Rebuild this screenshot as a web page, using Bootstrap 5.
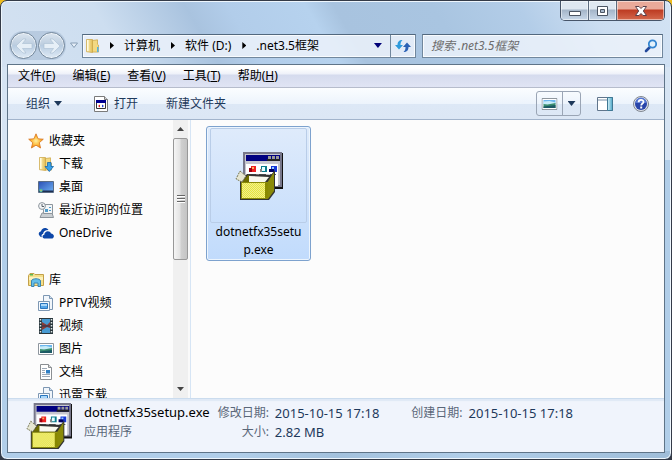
<!DOCTYPE html>
<html lang="zh-CN">
<head>
<meta charset="utf-8">
<meta name="viewport" content="width=device-width, initial-scale=1">
<title>.net3.5框架</title>
<link href="https://cdn.jsdelivr.net/npm/bootstrap@5.3.0/dist/css/bootstrap.min.css" rel="stylesheet">
<style>
:root{--ink:#1e395b;--edge:#5f7488}
body{font-family:"Noto Sans","Noto Sans CJK SC",sans-serif;font-size:12px;line-height:18px;color:#000;
 background:linear-gradient(90deg,#eebb1c 0 6px,#353b47 6px calc(100% - 6px),#eebb1c calc(100% - 6px)) top/100% 6px no-repeat,#353b47}
button{font:inherit;color:inherit;background:none;border:0;padding:0}
svg{display:block;flex:none}
.win{height:100vh;border:1px solid #343b48;border-radius:7px;overflow:hidden;padding:0 6px 6px;
 box-shadow:inset 0 0 0 1px #eef6fd;
 background:
 linear-gradient(60deg,#d3e1f1 0,#cddef0 18%,#a9c3df 31%,#b2cdea 37%,#b6d2ee 48%,#a8c3df 52%,#a9c5e1 66%,#b3cde8 78%,#cbddf1 88%,#d3e3f4) top/100% 66px no-repeat,
 linear-gradient(90deg,#b1cee9 0 35%,#a3c1dd 50%,#b1cee9 70%,#9fbdd9) bottom/100% 8px no-repeat,
 linear-gradient(180deg,#d6e4f3 0 159px,#b1cee9 159px)}
.capbtns{height:20px;border:1px solid #475569;border-top:0;border-radius:0 0 5px 5px;overflow:hidden}
.capbtns button{width:28px;background:linear-gradient(#dfe8f1 0 8px,#a4b5c8 9px,#c8d8e9);border-right:1px solid #5c6b7e;box-shadow:inset 0 0 0 1px #ffffff80}
.capbtns .close-w{width:47px;border:0;background:linear-gradient(#e9aa9a 0 8px,#bd3b22 9px,#d4694d)}
.navrow{padding:10px 2px 4px 2px}
.orb{width:27px;height:27px;border:1px solid #74889c;border-radius:50%;background:linear-gradient(#dbe5ef,#bccddf 48%,#b8cce1 50%,#dfeaf5);box-shadow:inset 0 0 0 1px #ffffff90}
.orbs{gap:1px;background:#9fb6cf80;border-radius:14px;padding:1px}
.field-w{height:24px;border:1px solid #71879d;border-top-color:#52687e;background:#ecf2fad9;box-shadow:inset 0 0 0 1px #f8fbfe}
.addr{flex:336 1 0;margin-right:6px}
.find{flex:242 1 0}
.find input{font-style:italic;border:0;background:none;outline:0;min-width:0;color:#333}
.find input::placeholder{color:#6d6d6d;opacity:1}
.crumbs{padding-left:3px}
.crumbs a,.menu-w a{color:#000;text-decoration:none;white-space:nowrap}
.tri{width:4px;height:7px;background:#000;clip-path:polygon(0 0,100% 50%,0 100%);margin:0 10px 0 11px}
.down{width:8px;height:5px;background:var(--ink);clip-path:polygon(0 0,100% 0,50% 100%)}
.down.navy{background:#000078}
.go{width:25px;border-left:1px solid #71879d}
.client{border:1px solid var(--edge);min-height:0;background:#fcfcfc}
.menu-w{height:23px;gap:17px;padding:0 10px;background:linear-gradient(#fff 0 3px,#eef1f9 9px,#d5dbee 10px,#e0e4f4);border-bottom:1px solid #b6bccc}
.tools{height:32px;color:var(--ink);padding:0 15px 0 18px;background:linear-gradient(#fbfdff 0,#edf4fc 50%,#dde8f6 51%,#dce7f5);border-bottom:1px solid #a2b4cc}
.tools .open-w{gap:6px}
.split{height:25px;border:1px solid #9aa5b5;border-radius:3px}
.split button{height:100%}
.split button+button{border-left:1px solid #9aa5b5;width:18px}
.body-w{min-height:0}
.side{width:183px;border-right:1px solid #d6e5f5;min-height:0}
.tree{padding:9px 0 0 20px;overflow:hidden}
.tree ul{padding-left:10px}
.tree a{display:flex;align-items:center;gap:5px;height:23px;color:#000;text-decoration:none;white-space:nowrap}
.bar-v{width:17px;background:#f0f0f0;border-right:2px solid #fafafa}
.bar-v button{height:18px;width:100%}
.thumb{flex:0 0 122px;border:1px solid #989898;border-radius:2px;background:linear-gradient(90deg,#f5f5f5,#e4e4e4 45%,#cfcfcf 55%,#c4c4c4)}
.grip{width:8px;height:9px;background:repeating-linear-gradient(#666 0 1px,#fff 1px 2px,transparent 2px 3px)}
.files{padding:6px 15px}
.tile{width:105px;height:135px;border:1px solid #7da2ce;border-radius:3px;background:linear-gradient(#dfebfb,#c1dbfc);padding:1px 3px;box-shadow:inset 0 0 0 1px #edf5fd}
.thumbbox{height:96px;width:97px;border:1px solid #b9cde8;border-radius:2px}
.tile span{width:88px;word-break:break-all}
.info{height:54px;background:#f0f4fc;border-top:1px solid #cbdcee;box-shadow:inset 0 2px 1px #dfe9f6;color:var(--ink);padding:0 12px 0 18px;white-space:nowrap}
.info dl{display:grid;grid-template-columns:auto auto;column-gap:6px;grid-auto-rows:19px;margin:0;align-items:center}
.info dt{font-weight:400;color:#5a6779;text-align:right}
.info dd{margin:0;font-size:13px}
.fname{font-size:13px;color:#000;line-height:19px}
.kind{color:#5a6779;line-height:19px}
</style>
<script src="https://cdn.jsdelivr.net/npm/bootstrap@5.3.0/dist/js/bootstrap.bundle.min.js"></script>
</head>
<body>
<svg width="0" height="0" class="position-absolute" aria-hidden="true">
 <defs>
  <linearGradient id="fold" x2="1"><stop stop-color="#fdf3bd"/><stop offset="1" stop-color="#e2bd55"/></linearGradient>
  <linearGradient id="blue" y2="1"><stop stop-color="#2a4fb4"/><stop offset="1" stop-color="#6fb2f4"/></linearGradient>
  <linearGradient id="cyan" x2="1"><stop stop-color="#d8f3fa"/><stop offset="1" stop-color="#4ba5c6"/></linearGradient>
  <radialGradient id="star"><stop stop-color="#fff0a0"/><stop offset=".6" stop-color="#fdb93a"/><stop offset="1" stop-color="#ee8420"/></radialGradient>
  <pattern id="dots" width="2" height="2" patternUnits="userSpaceOnUse"><path fill="#e6e43c" d="M0 0h2v2H0z"/><path fill="#f0ee90" d="M0 0h1v1H0zM1 1h1v1H1z"/></pattern>
  <symbol id="i-exe" viewBox="0 0 48 48">
   <path fill="#111" d="M9 1h39v36H9z"/><path fill="#77778a" d="M8 0h39v35H8z"/><path fill="#c6c6ce" d="M10 2h35v31H10z"/>
   <path fill="#000080" d="M11 3h34v6H11z"/><path fill="#999" d="M33 4h3v3h-3zM37 4h3v3h-3zM41 4h3v3h-3z"/><path fill="#222" d="M32 7h13v2H32z"/>
   <path fill="#fff" d="M11 12h32v22H11z"/><path fill="#d8d8e0" d="M12 22h29v1H12z"/>
   <path fill="#e22" d="M16 14h5v6h-5z"/><path fill="#901" d="M14 16h3v4h-3z"/><path fill="#ffb060" d="M17 15h2v2h-2z"/>
   <path fill="#0a7a8c" d="M26 14h6v6h-6z"/><path fill="#e5ffff" d="M27 15h3v4h-3z"/><path fill="#888" d="M25 17h2v3h-2z"/>
   <path fill="#1638d8" d="M36 14h6v6h-6z"/><path fill="#000060" d="M34 17h5v3h-5z"/><path fill="#9cf" d="M37 15h2v2h-2z"/>
   <path fill="#555" d="M14 22h7v1h-7zM24 22h7v1h-7zM35 22h6v1h-6z"/>
   <path fill="#333" d="M5 29 12 22 36 23 40 18 40 40 34 48H5z"/>
   <path fill="#8a8a08" d="m32 31 7-11v19l-6 8z"/><path fill="#6d6c00" d="m7 30 6-7 3 1v6z"/>
   <path fill="#f8f8ee" d="m14 24 20 1-4 5H14z"/>
   <path fill="url(#dots)" stroke="#8a8a08" d="M6.500 30.500h26v16h-26z"/><path fill="#888800" d="M30 31h3v15h-3z"/>
   <path fill="#e6e6d2" stroke="#777755" stroke-dasharray="2 1" d="m5 19 6 5-4 6-6-3z"/>
  </symbol>
  <symbol id="i-folder" viewBox="0 0 16 16"><path fill="url(#fold)" stroke="#c9a23f" stroke-width=".7" d="M1.500 1.500h6v13l-6-.8z"/><path fill="#f3d981" stroke="#c9a23f" stroke-width=".7" d="m7.500 2.500 5-.7v4.500l1 .8v7h-6z"/><path fill="#fffbe0" d="M2 2h1.500v11L2 12.800z"/><path fill="#56b3df" d="M12 9h1.500v5H12z"/></symbol>
  <symbol id="i-photo" viewBox="0 0 16 16"><path fill="#fff" stroke="#8e969e" d="M.5 2.500h15v11H.5z"/><path fill="#6bb6ee" d="M2 4h12v4H2z"/><path fill="#c8ecf8" d="M2 5.500 8 5l6 1.500V9H2z"/><path fill="#3c8f70" d="M2 8l4 .6L14 7v5H2z"/><path fill="#1c5a65" d="M2 10.500 14 9v3H2z"/></symbol>
  <symbol id="i-lib" viewBox="0 0 16 16"><path fill="#f1f6fb" stroke="#7d97b3" d="M5.500.5h6l3 3v11h-9z"/><path fill="#d4e1ef" stroke="#7d97b3" d="M11.500.5v3h3"/><path fill="#f8fbfe" stroke="#7d97b3" d="M.5 6.500h11v9H.5z"/><path fill="#54a5e8" stroke="#2b76be" d="M2.500 8.500h7v5h-7z"/><path fill="#a9d7fa" d="M3 9h6v2H3z"/></symbol>
 </defs>
</svg>

<div class="win d-flex flex-column">
 <div class="capbtns d-flex align-self-end flex-shrink-0">
  <button type="button" aria-label="最小化" class="d-flex align-items-center justify-content-center"><svg width="14" height="14"><path fill="#fff" stroke="#4b5563" d="M1.500 7.500h11v4h-11z"/></svg></button>
  <button type="button" aria-label="最大化" class="d-flex align-items-center justify-content-center"><svg width="13" height="12"><path fill="#fff" stroke="#4b5563" fill-rule="evenodd" d="M1.500 1.500h10v9h-10zM4.500 4.500v3h4v-3z"/></svg></button>
  <button type="button" aria-label="关闭" class="close-w d-flex align-items-center justify-content-center"><svg width="14" height="12"><path fill="#fff" stroke="#59404a" d="M1.500 1.500h3.500l2 2 2-2h3.500L9.300 6l3.200 4.500H9l-2-2-2 2H1.500L4.700 6z"/></svg></button>
 </div>

 <div class="navrow d-flex align-items-center">
  <div class="orbs d-flex flex-shrink-0">
   <button type="button" class="orb d-flex align-items-center justify-content-center" aria-label="后退"><svg width="18" height="16"><path fill="#e6eff7" stroke="#a9bed2" stroke-width=".6" d="M1 8 8 1h3L7.500 5.500H17v5H7.500L11 15H8z"/></svg></button>
   <button type="button" class="orb d-flex align-items-center justify-content-center" aria-label="前进"><svg width="18" height="16"><path fill="#e6eff7" stroke="#a9bed2" stroke-width=".6" d="M17 8 10 1H7l3.500 4.500H1v5h9.500L7 15h3z"/></svg></button>
  </div>
  <button type="button" aria-label="最近的页面" class="mx-1"><svg width="8" height="7"><path fill="#e6eff8" stroke="#879db5" d="M.5 1h7L4 5.500z"/></svg></button>
  <div class="field-w addr d-flex">
   <nav class="crumbs d-flex align-items-center flex-grow-1" aria-label="地址">
    <svg width="13" height="16" viewBox="1 0 13 16"><use href="#i-folder" width="16" height="16"/></svg>
    <i class="tri"></i><a href="#">计算机</a><i class="tri"></i><a href="#">软件 (D:)</a><i class="tri"></i><a href="#">.net3.5框架</a>
    <button type="button" class="ms-auto me-2" aria-label="以前的位置"><i class="down navy d-block"></i></button>
   </nav>
   <button type="button" class="go d-flex align-items-center justify-content-center" aria-label="刷新"><svg width="16" height="14"><path fill="#2e9bdc" d="M0 6h2.500C2.500 3 4 1 7.500 1 6 2.500 5.500 3.500 5.500 6H8l-4 4.500z"/><path fill="#2b62b5" d="M16 8h-2.500c0 3-1.500 5-5 5 1.500-1.500 2-2.500 2-5H8l4-4.500z"/></svg></button>
  </div>
  <div class="field-w find d-flex align-items-center">
   <input type="text" class="flex-grow-1 ps-2" aria-label="搜索" placeholder="搜索 .net3.5框架">
   <button type="button" class="me-1" aria-label="开始搜索"><svg width="14" height="14"><path stroke="#24499b" stroke-width="2.600" stroke-linecap="round" d="m6 8-4 4"/><circle cx="8.500" cy="5" r="3.700" fill="#e3f2fc" stroke="#3485d0" stroke-width="1.800"/></svg></button>
  </div>
 </div>

 <div class="client d-flex flex-column flex-grow-1">
  <nav class="menu-w d-flex align-items-center flex-shrink-0" aria-label="菜单">
   <a href="#">文件(<u>F</u>)</a><a href="#">编辑(<u>E</u>)</a><a href="#">查看(<u>V</u>)</a><a href="#">工具(<u>T</u>)</a><a href="#">帮助(<u>H</u>)</a>
  </nav>

  <div class="tools d-flex align-items-center flex-shrink-0">
   <button type="button" class="d-flex align-items-center">组织<i class="down ms-1"></i></button>
   <button type="button" class="open-w d-flex align-items-center ms-4 px-2"><svg width="14" height="16"><path fill="#fff" stroke="#7a7a7a" d="M.5.5h10l3 3v12H.5z"/><path fill="#d6d6d6" stroke="#7a7a7a" d="M10.500.5v3h3"/><path fill="#fff" stroke="#333" d="M2.500 4.500h9v8h-9z"/><path fill="#000090" d="M2 4h10v3H2z"/><path fill="#e02020" d="m4 10 2-1.500v3z"/><path fill="#2040d0" d="m10 10-2-1.500v3z"/></svg>打开</button>
   <button type="button" class="ms-3 ps-1">新建文件夹</button>
   <div class="split d-flex ms-auto">
    <button type="button" class="px-1 d-flex align-items-center" aria-label="更改视图"><svg width="17" height="14" viewBox="0 1 16 14"><use href="#i-photo" width="16" height="16"/></svg></button>
    <button type="button" class="d-flex align-items-center justify-content-center" aria-label="更多选项"><i class="down"></i></button>
   </div>
   <button type="button" class="ms-3" aria-label="预览窗格"><svg width="16" height="14"><path fill="#fff" stroke="#60758c" d="M.5.5h15v13H.5z"/><path fill="#7890a8" d="M1 2.500h9v1H1z"/><path fill="url(#cyan)" stroke="#3f7894" d="M10.500.5h5v13h-5z"/></svg></button>
   <button type="button" class="ms-3 ps-1" aria-label="帮助"><svg width="16" height="16"><circle cx="8" cy="8" r="7.500" fill="#dfe3ea" stroke="#7f858f"/><circle cx="8" cy="8" r="6" fill="#2945a9"/><path fill="#5677d2" d="M2.500 7a5.500 5.500 0 0 1 11 0z"/><path fill="none" stroke="#fff" stroke-width="1.800" d="M5.600 6.300C5.600 3 10.600 3.200 10.500 6 10.400 7.600 8.200 7.500 8.200 9.500"/><path fill="#fff" d="M7.200 10.600h2v2h-2z"/></svg></button>
  </div>

  <div class="body-w d-flex flex-grow-1">
   <div class="side d-flex flex-shrink-0">
    <nav class="tree flex-grow-1" aria-label="导航窗格">
     <a href="#"><svg width="16" height="16"><path fill="url(#star)" stroke="#d9771e" stroke-width=".8" d="m8 .8 2.100 5 5.200.4-4 3.500 1.300 5.300L8 12.200 3.400 15l1.300-5.300-4-3.500 5.200-.4z"/></svg>收藏夹</a>
     <ul class="list-unstyled mb-4">
      <li><a href="#"><svg width="16" height="16"><use href="#i-folder" width="16" height="16"/><path fill="#3aa2ea" stroke="#1767aa" stroke-width=".8" d="M9.500 6.500h3.500v4h2.500l-4.200 5-4.300-5h2.500z"/></svg>下载</a></li>
      <li><a href="#"><svg width="16" height="16"><path fill="url(#blue)" stroke="#5a6c84" d="M.5 2.500h15v11H.5z"/><path fill="#1d2f50" d="M1 11.500h14V13H1z"/><circle cx="3" cy="11.500" r="1.700" fill="#53b7a0"/><path fill="#f5c34c" d="M2.500 11h1v1h-1z"/></svg>桌面</a></li>
      <li><a href="#"><svg width="16" height="16"><path fill="#c9ced2" stroke="#8d959c" d="M2 15.500 4 11h10l1.500 4.500z"/><path fill="#f3f6f8" stroke="#8d959c" d="M5.500 2.500h9v9h-9z"/><path fill="#4f9ccb" d="M7 7h3v3H7zM11 5h2v1h-2zM11 8h2v1h-2z"/><circle cx="4" cy="4" r="3.400" fill="#f4f6f7" stroke="#8b949b"/><path fill="none" stroke="#56616b" d="M4 2v2.500h2"/></svg>最近访问的位置</a></li>
      <li><a href="#"><svg width="16" height="16"><path fill="#0d47a8" d="M1.500 10.500C0 9 1 6.500 3 6.500 3.500 3 8 1.500 10.500 5 7 5 5.500 6.500 5 9 3.500 9 3 11 4 12.200 2.800 12.200 2 11.600 1.500 10.500z"/><path fill="#0d47a8" d="M6 13.500c-2-.5-2-3.500.3-3.800C6.500 5.500 12 5 13 8.500c2 .2 3.200 1.700 2.800 3.200-.3 1.300-1.200 1.800-2.500 1.800z"/></svg>OneDrive</a></li>
     </ul>
     <a href="#"><svg width="16" height="16"><path fill="#f5df8a" stroke="#c2a04a" d="M.5 3.500 2 1.500h4l1 1h8.500v11H.5z"/><path fill="#5ab94f" d="M2 2h3v1.500H2z"/><path fill="#fcf1bb" d="M1 5h14v3H1z"/><path fill="#66bfe8" stroke="#3a86b3" d="M3.500 14.500V9c0-3 9-3 9 0v5.500h-2.500V11H6v3.500z"/></svg>库</a>
     <ul class="list-unstyled mb-0">
      <li><a href="#"><svg width="16" height="16"><use href="#i-lib"/></svg>PPTV视频</a></li>
      <li><a href="#"><svg width="16" height="16"><path fill="#29363c" d="M1 0h14v16H1z"/><path fill="#479ad2" d="M4 1h8v14H4z"/><path fill="#8a3b34" d="m4 4 5 3 3-3v6L9 9l-5 3z"/><path fill="#1d3456" d="M4 7.500h8v1H4z"/><path stroke="#dfe8e8" stroke-width="1.500" stroke-dasharray="1.500 1.500" d="M2.500 1v15M13.500 1v15"/></svg>视频</a></li>
      <li><a href="#"><svg width="16" height="16"><use href="#i-photo"/></svg>图片</a></li>
      <li><a href="#"><svg width="16" height="16"><path fill="#fff" stroke="#8b8f93" d="M2.500.5h8l3 3v12h-11z"/><path fill="#ddd" stroke="#8b8f93" d="M10.500.5v3h3"/><path stroke="#9da9b7" d="M4 4.500h5M4 6.500h3M4 8.500h3M4 10.500h8M4 12.500h8"/><path fill="#2f7fc4" d="M8 6h4v3.500H8z"/></svg>文档</a></li>
      <li><a href="#"><svg width="16" height="16"><use href="#i-lib"/></svg>迅雷下载</a></li>
     </ul>
    </nav>
    <div class="bar-v d-flex flex-column flex-shrink-0">
     <button type="button" aria-label="向上滚动" class="d-flex align-items-center justify-content-center flex-shrink-0"><svg width="7" height="4"><path fill="#444" d="M0 4 3.500 0 7 4z"/></svg></button>
     <div class="thumb d-flex align-items-center justify-content-center"><i class="grip"></i></div>
     <button type="button" aria-label="向下滚动" class="mt-auto d-flex align-items-center justify-content-center flex-shrink-0"><svg width="7" height="4"><path fill="#444" d="M0 0h7L3.500 4z"/></svg></button>
    </div>
   </div>
   <main class="files flex-grow-1">
    <button type="button" class="tile d-flex flex-column align-items-center">
     <div class="thumbbox d-flex align-items-center justify-content-center"><svg width="48" height="48"><use href="#i-exe"/></svg></div>
     <span>dotnetfx35setup.exe</span>
    </button>
   </main>
  </div>

  <footer class="info d-flex flex-shrink-0">
   <svg width="46" height="46" class="mt-1"><use href="#i-exe"/></svg>
   <div class="ms-2 ps-1 pt-1"><div class="fname">dotnetfx35setup.exe</div><div class="kind">应用程序</div></div>
   <dl class="ms-2 pt-1"><dt>修改日期:</dt><dd>2015-10-15 17:18</dd><dt>大小:</dt><dd>2.82 MB</dd></dl>
   <dl class="ms-4 ps-2 pt-1"><dt>创建日期:</dt><dd>2015-10-15 17:18</dd></dl>
  </footer>
 </div>
</div>
</body>
</html>
